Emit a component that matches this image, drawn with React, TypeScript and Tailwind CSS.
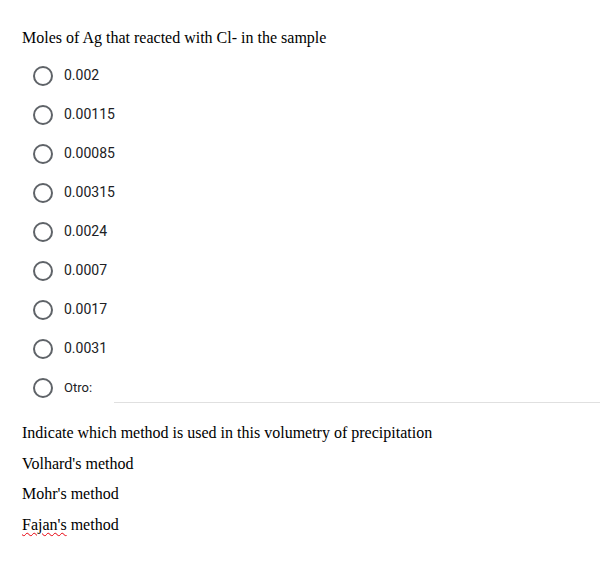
import React from 'react';

const options = ['0.002', '0.00115', '0.00085', '0.00315', '0.0024', '0.0007', '0.0017', '0.0031'];

const Radio: React.FC = () => (
    <span className="block w-[20px] h-[20px] rounded-full border-2 border-[#5f6368] shrink-0" />
);

export default function App() {
    return (
        <div className="w-[616px] h-[572px] bg-white pt-[29px] pl-[22px]">
            {/* Question */}
            <div className="font-['Liberation_Serif',serif] text-[16px] leading-[18px] text-black">
                Moles of Ag that reacted with Cl- in the sample
            </div>

            {/* Options */}
            <div className="mt-[9px] pl-[11px] font-['Roboto',sans-serif] text-[14px] text-[#202124]">
                {options.map((opt) => (
                    <div key={opt} className="flex items-center h-[39px]">
                        <Radio />
                        <span className="ml-[11px]">{opt}</span>
                    </div>
                ))}
                <div className="flex items-center h-[39px]">
                    <Radio />
                    <span className="ml-[11px] text-[13px]">Otro:</span>
                    <div className="ml-[22px] flex-1 h-[1px] bg-[#e0e0e0] mt-[30px] mr-[16px]" />
                </div>
            </div>

            {/* Second question */}
            <div className="mt-[17px] font-['Liberation_Serif',serif] text-[16px] text-black flex flex-col gap-[12px] leading-[18.5px]">
                <div>Indicate which method is used in this volumetry of precipitation</div>
                <div>Volhard's method</div>
                <div>Mohr's method</div>
                <div>
                    <span className="underline decoration-wavy decoration-red-600 decoration-1 underline-offset-2">Fajan's</span> method
                </div>
            </div>
        </div>
    );
}
